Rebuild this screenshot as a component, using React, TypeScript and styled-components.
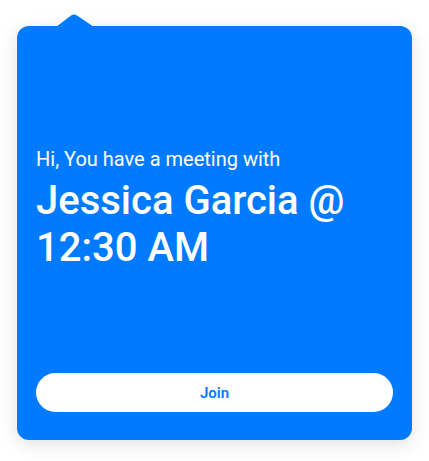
import React from 'react';
import styled, { createGlobalStyle } from 'styled-components';

const GlobalStyle = createGlobalStyle`
  html, body {
    margin: 0;
    padding: 0;
    background: #fff;
  }
  body {
    font-family: Roboto, "Liberation Sans", sans-serif;
  }
`;

const Page = styled.div`
  padding: 26px 17px 20px 17px;
`;

const Card = styled.div`
  position: relative;
  width: 395px;
  height: 414px;
  box-sizing: border-box;
  background-color: #007aff;
  border-radius: 12px;
  box-shadow: 0 4px 18px rgba(0, 0, 0, 0.12);
  padding: 0 19px 28px 19px;
  display: flex;
  flex-direction: column;
`;

const Tip = styled.svg`
  position: absolute;
  top: -12px;
  left: 39px;
  display: block;
`;

const Message = styled.div`
  flex: 1;
  padding-top: 121px;
  color: #fff;
`;

const Greeting = styled.p`
  margin: 0;
  font-size: 20px;
  line-height: 24px;
  font-weight: 400;
`;

const Title = styled.h1`
  margin: 6px 0 0 0;
  font-size: 40px;
  line-height: 47px;
  font-weight: 500;
`;

const JoinButton = styled.button`
  width: 100%;
  height: 39px;
  border: none;
  border-radius: 20px;
  background-color: #fff;
  color: #007aff;
  font-family: Roboto, "Liberation Sans", sans-serif;
  font-size: 15px;
  font-weight: 600;
  cursor: pointer;
`;

const App = () => {
  return (
    <>
      <GlobalStyle />
      <Page>
        <Card>
          <Tip width="38" height="13" viewBox="0 0 38 13">
            <path d="M0 13 L15 1.6 Q18 -0.6 21 1.6 L38 13 Z" fill="#007aff" />
          </Tip>
          <Message>
            <Greeting>Hi, You have a meeting with</Greeting>
            <Title>
              Jessica Garcia @
              <br />
              12:30 AM
            </Title>
          </Message>
          <JoinButton>Join</JoinButton>
        </Card>
      </Page>
    </>
  );
};

export default App;
